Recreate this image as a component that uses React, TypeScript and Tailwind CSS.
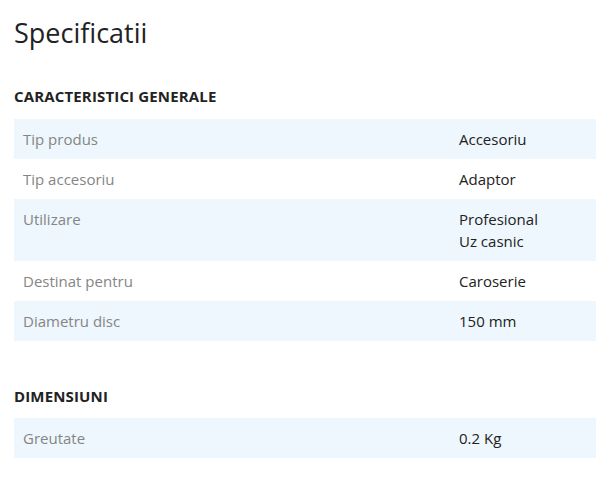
import React from "react";

type Row = { label: string; values: string[] };

const general: Row[] = [
  { label: "Tip produs", values: ["Accesoriu"] },
  { label: "Tip accesoriu", values: ["Adaptor"] },
  { label: "Utilizare", values: ["Profesional", "Uz casnic"] },
  { label: "Destinat pentru", values: ["Caroserie"] },
  { label: "Diametru disc", values: ["150 mm"] },
];

const dims: Row[] = [{ label: "Greutate", values: ["0.2 Kg"] }];

function Table({ rows }: { rows: Row[] }) {
  return (
    <div className="flex flex-col">
      {rows.map((r, i) => (
        <div
          key={r.label}
          className={`grid min-h-[40px] grid-cols-[436px_1fr] text-[15px] leading-[22px] ${
            i % 2 === 0 ? "bg-[#eef7fd]" : "bg-white"
          }`}
        >
          <div className="px-[9px] py-[9px] text-[#858585]">{r.label}</div>
          <div className="px-[9px] py-[9px] text-[#222222]">
            {r.values.map((v) => (
              <div key={v}>{v}</div>
            ))}
          </div>
        </div>
      ))}
    </div>
  );
}

export default function App() {
  return (
    <div
      className="w-[596px] h-[480px] bg-white pl-[14px] overflow-hidden"
      style={{ fontFamily: '"Open Sans", sans-serif' }}
    >
      <h1 className="mt-[15px] text-[27px] leading-[36px] text-[#222222] font-normal">
        Specificatii
      </h1>
      <h2 className="mt-[35px] mb-[13px] text-[15px] leading-[20px] font-bold tracking-[0.15px] text-[#222222]">
        CARACTERISTICI GENERALE
      </h2>
      <Table rows={general} />
      <h2 className="mt-[45px] mb-[12px] text-[15px] leading-[20px] font-bold tracking-[0.15px] text-[#222222]">
        DIMENSIUNI
      </h2>
      <Table rows={dims} />
    </div>
  );
}
